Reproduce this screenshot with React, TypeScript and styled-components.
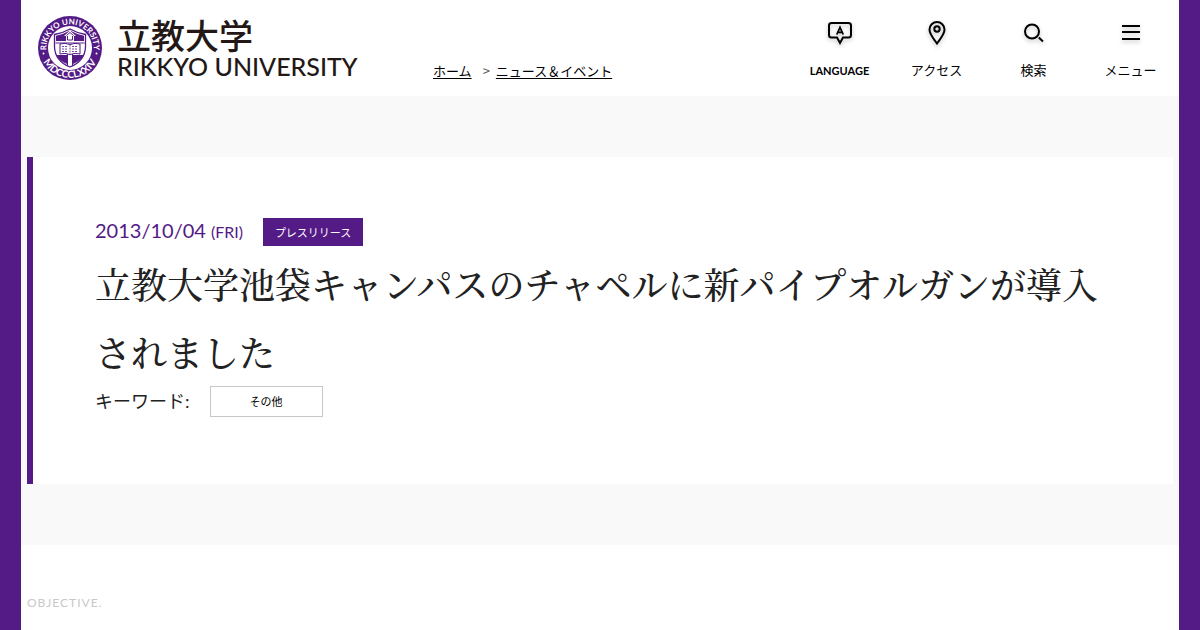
import React from 'react';
import styled, { createGlobalStyle } from 'styled-components';

const purple = '#541b86';
const latin = `Lato, "Noto Sans CJK JP", sans-serif`;

const GlobalStyle = createGlobalStyle`
  *, *::before, *::after { box-sizing: border-box; }
  body {
    margin: 0;
    background: #fff;
    color: #222;
    font-family: ${latin};
  }
  a { color: inherit; }
`;

const Page = styled.div`
  min-height: 100vh;
  border: solid ${purple};
  border-width: 0 21px;
`;

const Header = styled.header`
  display: flex;
  align-items: stretch;
  height: 96px;
  padding: 0 0 0 16px;
  color: #000;
`;

const Brand = styled.a`
  display: flex;
  align-items: center;
  gap: 14px;
  width: 396px;
  color: #231815;
  text-decoration: none;
  white-space: nowrap;
`;

const BrandNames = styled.span`
  display: flex;
  flex-direction: column;
`;

const BrandJa = styled.span`
  font: 500 34px/35px "Noto Sans CJK JP", sans-serif;
`;

const BrandEn = styled.span`
  font: 500 25px/28px Lato, sans-serif;
`;

const Breadcrumb = styled.nav`
  flex: 1;
  display: flex;
  align-items: flex-end;
  padding-bottom: 16px;

  ol {
    display: flex;
    margin: 0;
    padding: 0;
    list-style: none;
    font: 13px/18px "Noto Sans CJK JP", sans-serif;
    white-space: nowrap;
  }
  li + li::before {
    content: ">";
    padding: 0 6px 0 11px;
    color: #555;
  }
  a { text-underline-offset: 2px; }
`;

const Tools = styled.div`
  display: flex;
`;

const Tool = styled.button`
  display: flex;
  flex-direction: column;
  align-items: center;
  gap: 14px;
  width: 97px;
  padding: 18px 0 0;
  border: 0;
  background: none;
  color: #000;
  font: 400 13px/20px ${latin};
  white-space: nowrap;

  svg { filter: drop-shadow(0 2px 2px rgba(0, 0, 0, 0.25)); }
`;

const LatinLabel = styled.span`
  font-size: 11px;
  font-weight: 700;
  line-height: 22px;
`;

const Hero = styled.section`
  padding: 61px 6px;
  background: #f9f9f9;
`;

const Card = styled.article`
  padding: 61px 62px 67px;
  border-left: 6px solid ${purple};
  background: #fff;
`;

const Meta = styled.div`
  display: flex;
  align-items: flex-start;
  gap: 20px;
  height: 28px;
`;

const PostDate = styled.time`
  color: ${purple};
  font-size: 20px;
  line-height: 24px;
  small { font-size: 16px; }
`;

const Category = styled.a`
  width: 100px;
  height: 28px;
  background: ${purple};
  color: #fff;
  font-size: 11px;
  line-height: 29px;
  text-align: center;
  text-decoration: none;
`;

const Title = styled.h1`
  margin: 4px 0 0;
  font: 500 36px/68px "Noto Serif CJK JP", "Noto Serif JP", "Noto Sans CJK JP", serif;
`;

const Keywords = styled.div`
  display: flex;
  align-items: center;
  gap: 20px;
  color: #222;
  font-size: 18px;
  line-height: 31px;
`;

const Keyword = styled.a`
  width: 113px;
  border: 1px solid #c8c8c8;
  color: #000;
  font-size: 11px;
  line-height: 29px;
  text-align: center;
  text-decoration: none;
`;

const Section = styled.section`
  padding: 48px 6px 0;
`;

const SectionLabel = styled.p`
  margin: 0;
  color: #c8c8c8;
  font-size: 12px;
  line-height: 20px;
  letter-spacing: 1px;
`;

const Seal = () => (
  <svg width="66" height="66" viewBox="0 0 66 66" aria-hidden="true">
    <defs>
      <path id="sealTop" d="M12.500 45A23.700 23.700 0 1 1 53.500 45" />
      <path id="sealBottom" d="M3 33A30 30 0 0 0 63 33" />
    </defs>
    <circle cx="33" cy="33" r="32" fill={purple} />
    <circle cx="33" cy="33" r="22" fill="#fff" />
    <g fill="#fff" fontFamily="Lato, sans-serif" fontWeight="700" textAnchor="middle">
      <text fontSize="8"><textPath href="#sealTop" startOffset="50%">RIKKYO UNIVERSITY</textPath></text>
      <text fontSize="10"><textPath href="#sealBottom" startOffset="50%">MDCCCLXXIV</textPath></text>
    </g>
    <circle cx="6.500" cy="38.500" r="1" fill="#fff" />
    <circle cx="59.500" cy="38.500" r="1" fill="#fff" />
    <path d="M17.500 19.500Q26 18 33 14Q40 18 48.500 19.500V32Q48 46 33 52Q18 46 17.500 32Z" fill="#fff" stroke={purple} strokeWidth="1.300" />
    <path d="M19 20.700Q27 19.200 33 15.600Q39 19.200 47 20.700V26H19Z" fill={purple} />
    <path d="M27 21L33 15.500L39 21H37V26H29V21Z" fill="#fff" />
    <path d="M29.500 20.500L33 17.500L36.500 20.500M30.500 21V25H35.500V21" fill="none" stroke={purple} />
    <path d="M19.500 40H30V49Q22 46 19.500 40ZM36 40H46.500Q44 46 36 49Z" fill={purple} />
    <path d="M18.500 28H47.500" stroke={purple} />
    <path d="M30.500 39V50.500M35.500 39V50.500" stroke={purple} />
    <path d="M23 29Q28 27.500 33 29.500Q38 27.500 43 29V39Q38 37.500 33 39.500Q28 37.500 23 39Z" fill="#fff" stroke={purple} />
    <path d="M33 29.500V39.500M25 31.500H31M25 34H31M25 36.500H31M35 31.500H41M35 34H41M35 36.500H41" stroke={purple} strokeWidth=".8" strokeDasharray="2 1" />
  </svg>
);

const iconProps = { width: 28, height: 28, viewBox: '0 0 28 28', fill: 'none', stroke: '#000', strokeWidth: 2, 'aria-hidden': true } as const;

const LanguageIcon = () => (
  <svg {...iconProps}>
    <path d="M5.500 5H22.500Q25 5 25 7.500V17Q25 19.500 22.500 19.500H17L14 25L11 19.500H5.500Q3 19.500 3 17V7.500Q3 5 5.500 5Z" />
    <path d="M10.800 16.500L14 9.500L17.200 16.500M12 14.300H16" strokeWidth="1.800" />
  </svg>
);

const PinIcon = () => (
  <svg {...iconProps}>
    <path d="M14 25.500C11 21 6.500 16.500 6.500 11.500A7.500 7.500 0 0 1 21.500 11.500C21.500 16.500 17 21 14 25.500Z" />
    <circle cx="14" cy="11" r="2.700" />
  </svg>
);

const SearchIcon = () => (
  <svg {...iconProps}>
    <circle cx="12" cy="13.500" r="7" />
    <path d="M18.800 19.500L23 23.500" />
  </svg>
);

const MenuIcon = () => (
  <svg {...iconProps}>
    <path d="M5 8H23M5 14H23M5 21H23" />
  </svg>
);

export default function App() {
  return (
    <>
      <GlobalStyle />
      <Page>
        <Header>
          <Brand href="#">
            <Seal />
            <BrandNames>
              <BrandJa>立教大学</BrandJa>
              <BrandEn>RIKKYO UNIVERSITY</BrandEn>
            </BrandNames>
          </Brand>
          <Breadcrumb aria-label="パンくずリスト">
            <ol>
              <li><a href="#">ホーム</a></li>
              <li><a href="#">ニュース＆イベント</a></li>
            </ol>
          </Breadcrumb>
          <Tools>
            <Tool type="button"><LanguageIcon /><LatinLabel>LANGUAGE</LatinLabel></Tool>
            <Tool type="button"><PinIcon />アクセス</Tool>
            <Tool type="button"><SearchIcon />検索</Tool>
            <Tool type="button"><MenuIcon />メニュー</Tool>
          </Tools>
        </Header>
        <main>
          <Hero>
            <Card>
              <Meta>
                <PostDate dateTime="2013-10-04">2013/10/04 <small>(FRI)</small></PostDate>
                <Category href="#">プレスリリース</Category>
              </Meta>
              <Title>立教大学池袋キャンパスのチャペルに新パイプオルガンが導入されました</Title>
              <Keywords>
                <span>キーワード:</span>
                <Keyword href="#">その他</Keyword>
              </Keywords>
            </Card>
          </Hero>
          <Section>
            <SectionLabel>OBJECTIVE.</SectionLabel>
          </Section>
        </main>
      </Page>
    </>
  );
}
